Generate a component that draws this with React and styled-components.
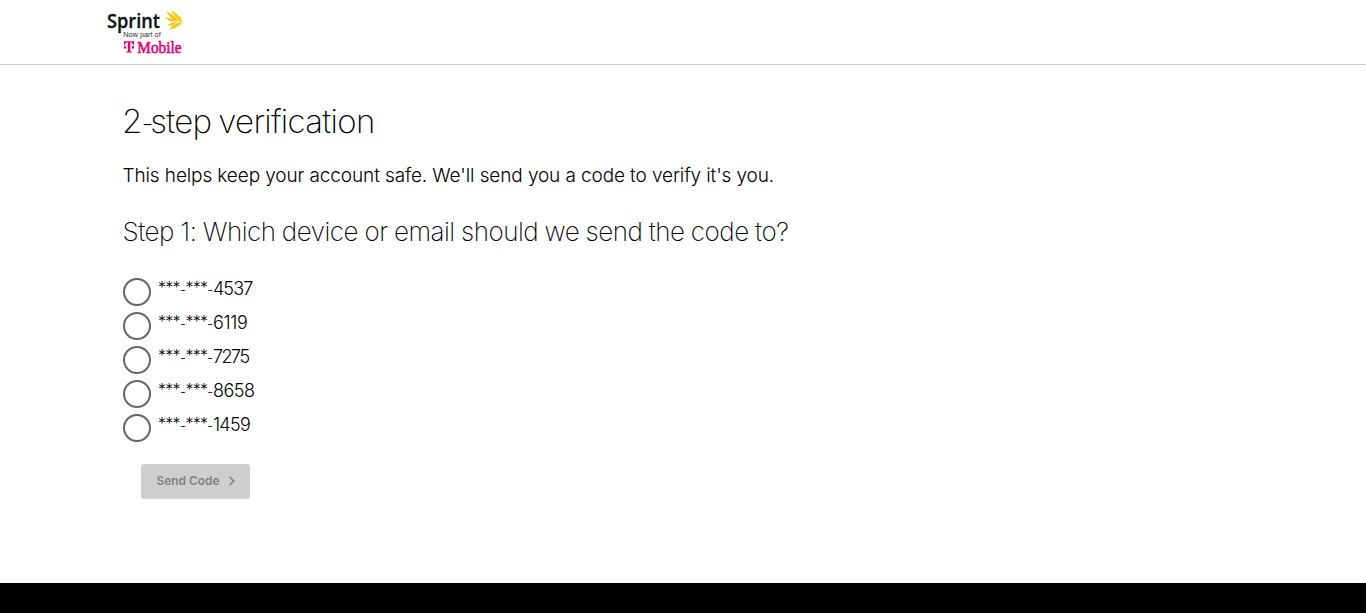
import React from "react";
import styled, { createGlobalStyle } from "styled-components";

const GlobalStyle = createGlobalStyle`
  * { box-sizing: border-box; }
  body { margin: 0; background: #fff; color: #000; font-family: Inter, "Liberation Sans", sans-serif; }
`;

const Page = styled.div`
  height: 613px;
  display: flex;
  flex-direction: column;
  overflow: hidden;
`;

const Header = styled.header`
  height: 65px;
  flex: none;
  padding: 8px 0 0 104px;
  border-bottom: 1px solid #ccc;
`;

const LogoSvg = styled.svg`
  display: block;
`;

const Main = styled.main`
  flex: 1;
  padding-left: 122px;
  white-space: nowrap;
`;

const Title = styled.h1`
  height: 42px;
  margin: 36px 0 0;
  font-size: 33px;
  line-height: 41px;
  font-weight: 200;
  letter-spacing: -0.68px;
  word-spacing: -1.7px;
`;

const TitleDash = styled.span`
  font-size: 26px;
  line-height: 0;
  letter-spacing: -3px;
`;

const Intro = styled.p`
  margin: 19px 0 0 0.5px;
  font-size: 19px;
  line-height: 28px;
  font-weight: 300;
  letter-spacing: -0.11px;
`;

const StepTitle = styled.h2`
  margin: 25px 0 0 0.5px;
  font-size: 26px;
  line-height: 34px;
  font-weight: 200;
  letter-spacing: -0.5px;
  word-spacing: -0.4px;
`;

const Options = styled.div`
  display: flex;
  flex-direction: column;
  gap: 6px;
  margin: 29px 0 0 1px;
`;

const Option = styled.label`
  display: flex;
  gap: 7px;
  height: 28px;
`;

const Radio = styled.span`
  width: 28px;
  height: 28px;
  border: 2px solid #666;
  border-radius: 50%;
`;

const OptionText = styled.span`
  font-size: 18px;
  line-height: 22px;
  font-weight: 300;
  letter-spacing: ${(p) => p.$track}px;
`;

const Mask = styled.span`
  font-size: 16px;
  line-height: 0;
  vertical-align: 2px;
  letter-spacing: -0.72px;
`;

const Dash = styled.span`
  font-size: 13px;
  line-height: 0;
  letter-spacing: -0.3px;
`;

const SendButton = styled.button`
  display: flex;
  align-items: center;
  gap: 8px;
  width: 109px;
  height: 35px;
  margin: 22px 0 0 19px;
  padding: 0 0 2px 15.5px;
  border: 0;
  border-radius: 3px;
  background: #cdcfce;
  color: #828280;
  font-family: inherit;
  font-size: 12px;
  font-weight: 600;
  letter-spacing: -0.05px;
`;

const Footer = styled.footer`
  height: 30px;
  flex: none;
  background: #000;
`;

const Logo = () => (
  <LogoSvg width="84" height="50" viewBox="104 8 84 50">
    <text x="107" y="28.2" fontFamily="Open Sans" fontWeight="600" fontSize="20" fill="#111" stroke="#111" strokeWidth="0.3" textLength="53" lengthAdjust="spacingAndGlyphs">Sprint</text>
    <g fill="#fdc40f">
      <path d="M171.3 10.6C176 12.6 180.5 16.8 182.5 21.6L179.4 21.5C176.8 18.6 173.8 15 171.3 10.6Z" />
      <path d="M166.4 11.6C171.3 13.2 175.8 16.6 178.3 21.2L175.2 21.2C171.6 18.8 168.6 15.8 166.4 11.6Z" />
      <path d="M165 17.6C169 17.6 173 19 175.8 21.7C171.6 22.2 168 20.8 165 17.6Z" />
      <path d="M167.4 25.8C169.8 23.4 173 22.1 177.2 22.1C174.8 24.6 171.4 26 167.4 25.8Z" />
      <path d="M169.2 29.4C172 25.4 176.2 22.7 182.4 22.1C179.8 26 175.4 28.7 169.2 29.4Z" />
    </g>
    <text x="123.3" y="37.4" fontFamily="Liberation Sans" fontSize="7.2" fill="#333" textLength="37.4" lengthAdjust="spacingAndGlyphs">Now part of</text>
    <path fill="#e20074" d="M124 41.3H134V45.2H133.1C132.9 43.2 132 42.2 130.3 42.2V50.3C130.3 51.3 130.8 51.8 132 51.8V52.6H126.1V51.8C127.3 51.8 127.8 51.3 127.8 50.3V42.2C126 42.2 125.1 43.2 124.9 45.2H124ZM124 46.3H126.2V48.5H124ZM131.9 46.3H134V48.5H131.9Z" />
    <g transform="translate(137.3 53) scale(0.84 1)">
      <text fontFamily="Liberation Serif" fontSize="17" fill="#e20074" stroke="#e20074" strokeWidth="0.6" textLength="52.6" lengthAdjust="spacingAndGlyphs">Mobile</text>
    </g>
    <circle cx="182.2" cy="47" r="0.5" fill="#e20074" opacity="0.5" />
  </LogoSvg>
);

const devices = [
  { last4: "4537", track: -0.9 },
  { last4: "6119", track: -0.3 },
  { last4: "7275", track: -1.5 },
  { last4: "8658", track: -0.5 },
  { last4: "1459", track: -0.7 },
];

export default function App() {
  return (
    <Page>
      <GlobalStyle />
      <Header>
        <Logo />
      </Header>
      <Main>
        <Title>2<TitleDash>-</TitleDash>step verification</Title>
        <Intro>This helps keep your account safe. We'll send you a code to verify it's you.</Intro>
        <StepTitle>Step 1: Which device or email should we send the code to?</StepTitle>
        <Options>
          {devices.map((d) => (
            <Option key={d.last4}>
              <Radio />
              <OptionText $track={d.track}>
                <Mask>***</Mask><Dash>-</Dash><Mask>***</Mask><Dash>-</Dash>{d.last4}
              </OptionText>
            </Option>
          ))}
        </Options>
        <SendButton>
          Send Code
          <svg width="8" height="10" viewBox="0 0 8 10" fill="none" stroke="#828280" strokeWidth="1.7">
            <path d="M1.5 1L5.8 5L1.5 9" />
          </svg>
        </SendButton>
      </Main>
      <Footer />
    </Page>
  );
}
